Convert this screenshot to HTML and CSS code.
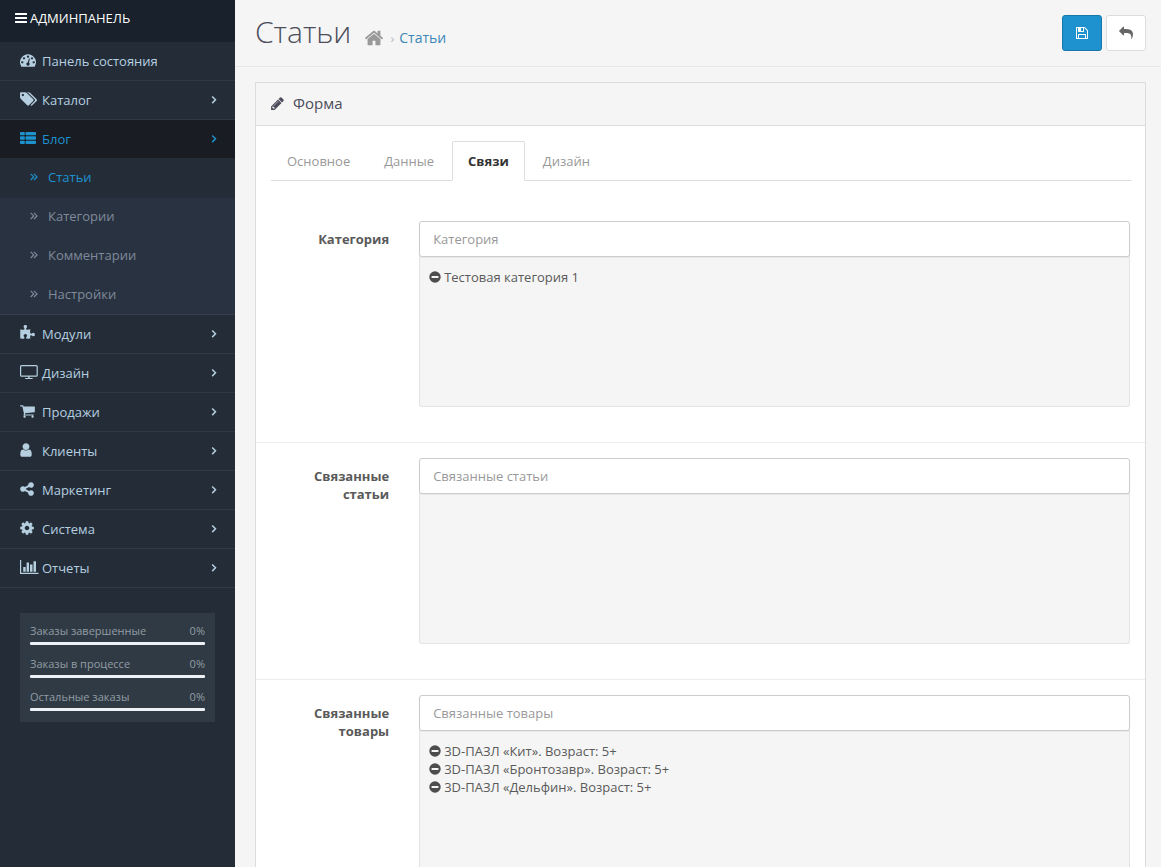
FILE: index.html
```html
<!DOCTYPE html>
<html lang="ru">
<head>
<meta charset="utf-8">
<title>Статьи</title>
<link rel="stylesheet" href="styles.css">
</head>
<body>
<svg class="sprite" aria-hidden="true">
  <symbol id="angle" viewBox="0 0 6 10"><path d="M1.200 1.500l3.300 3.300L1.200 8.100" fill="none" stroke="currentColor" stroke-width="1.500"/></symbol>
  <symbol id="double" viewBox="0 0 8 8"><path d="M.7.8L3.700 3.900.7 7M4 .8l3 3.100L4 7" fill="none" stroke="currentColor" stroke-width="1.200"/></symbol>
  <symbol id="minus" viewBox="0 0 12 12"><path fill-rule="evenodd" d="M6 .3a5.700 5.700 0 1 1 0 11.400A5.700 5.700 0 0 1 6 .3zM2.900 5a.4.4 0 0 0-.4.4v1.200c0 .2.2.4.4.4h6.200c.2 0 .4-.2.4-.4V5.400c0-.2-.2-.4-.4-.4z"/></symbol>
</svg>
<div class="app">
  <aside class="sidebar">
    <div class="brand">
      <svg class="brand-icon" viewBox="0 0 12 10"><path d="M.5 0h11a.5.5 0 0 1 .5.500v1a.5.5 0 0 1-.5.5H.5a.5.5 0 0 1-.5-.5v-1A.5.5 0 0 1 .5 0zM.5 4h11a.5.5 0 0 1 .5.5v1a.5.5 0 0 1-.5.5H.5a.5.5 0 0 1-.5-.5v-1A.5.5 0 0 1 .5 4zM.5 8h11a.5.5 0 0 1 .5.5v1a.5.5 0 0 1-.5.5H.5a.5.5 0 0 1-.5-.5v-1A.5.5 0 0 1 .5 8z"/></svg>
      <span>АДМИНПАНЕЛЬ</span>
    </div>
    <nav>
      <ul class="menu">
        <li><a class="item" href="#"><span class="icon"><svg width="16" height="16" viewBox="0 0 1792 1792"><path d="M384 1152q0-53-37.5-90.5t-90.5-37.5-90.5 37.5-37.5 90.5 37.5 90.5 90.5 37.5 90.5-37.5 37.5-90.5zm192-448q0-53-37.5-90.5t-90.5-37.5-90.5 37.5-37.5 90.5 37.5 90.5 90.5 37.500 90.5-37.5 37.5-90.5zm428 481l101-382q6-26-7.5-48.5t-38.5-29.5-48 6.5-30 39.5l-101 382q-60 5-107 43.5t-63 98.5q-20 77 20 146t117 89 146-20 89-117q16-60-6-117t-72-91zm660-33q0-53-37.5-90.5t-90.5-37.5-90.5 37.5-37.5 90.5 37.5 90.5 90.5 37.5 90.5-37.5 37.5-90.5zm-640-640q0-53-37.5-90.5t-90.5-37.5-90.5 37.5-37.5 90.5 37.5 90.5 90.5 37.5 90.5-37.5 37.5-90.5zm448 192q0-53-37.5-90.5t-90.5-37.5-90.5 37.5-37.5 90.5 37.5 90.5 90.5 37.5 90.5-37.5 37.5-90.5zm320 448q0 261-141 483-19 29-54 29h-1402q-35 0-54-29-141-221-141-483 0-182 71-348t191-286 286-191 348-71 348 71 286 191 191 286 71 348z"/></svg></span>Панель состояния</a></li>
        <li><a class="item" href="#"><span class="icon"><svg width="17" height="16" viewBox="0 0 1899 1792"><path d="M448 448q0-53-37.5-90.5t-90.5-37.5-90.5 37.5-37.5 90.5 37.5 90.5 90.5 37.5 90.5-37.5 37.5-90.5zm1067 576q0 53-37 90l-491 492q-39 37-91 37-53 0-90-37l-715-716q-38-37-64.5-101t-26.5-117v-416q0-52 38-90t90-38h416q53 0 117 26.5t102 64.5l715 714q37 39 37 91zm384 0q0 53-37 90l-491 492q-39 37-91 37-36 0-59-14t-53-45l470-470q37-37 37-90 0-52-37-91l-715-714q-38-38-102-64.5t-117-26.5h224q53 0 117 26.5t102 64.5l715 714q37 39 37 91z"/></svg></span>Каталог<svg class="angle"><use href="#angle"/></svg></a></li>
        <li><a class="item open" href="#"><span class="icon"><svg width="16" height="16" viewBox="0 0 16 16"><path d="M.8 2H4q.8 0 .8.8v1.600q0 .8-.8.8H.8Q0 5.200 0 4.400V2.800Q0 2 .8 2zM6.300 2h8.900q.8 0 .8.8v1.600q0 .8-.8.8H6.300q-.8 0-.8-.8V2.800q0-.8.8-.8zM.8 6.300H4q.8 0 .8.8v1.800q0 .8-.8.8H.8Q0 9.700 0 8.900V7.100q0-.8.8-.8zM6.300 6.300h8.900q.8 0 .8.8v1.800q0 .8-.8.8H6.300q-.8 0-.8-.8V7.100q0-.8.8-.8zM.8 10.800H4q.8 0 .8.8v1.600q0 .8-.8.8H.8q-.8 0-.8-.8v-1.600q0-.8.8-.8zM6.300 10.800h8.900q.8 0 .8.8v1.600q0 .8-.8.8H6.300q-.8 0-.8-.8v-1.600q0-.8.8-.8z"/></svg></span>Блог<svg class="angle"><use href="#angle"/></svg></a>
          <ul class="submenu">
            <li><a class="current" href="#"><svg class="double"><use href="#double"/></svg>Статьи</a></li>
            <li><a href="#"><svg class="double"><use href="#double"/></svg>Категории</a></li>
            <li><a href="#"><svg class="double"><use href="#double"/></svg>Комментарии</a></li>
            <li><a href="#"><svg class="double"><use href="#double"/></svg>Настройки</a></li>
          </ul>
        </li>
        <li><a class="item" href="#"><span class="icon"><svg width="15" height="16" viewBox="64 0 1700 1792"><path d="M1755 1083q0 81-44.5 135t-123.5 54q-41 0-77.5-17.5t-59-38-56.5-38-71-17.5q-110 0-110 124 0 39 16 115t15 115v5q-22 0-33 1-34 3-97.5 11.5t-115.5 13.5-98 5q-61 0-103-26.5t-42-83.5q0-37 17.5-71t38-56.5 38-59 17.5-77.5q0-79-54-123.5t-135-44.5q-84 0-143 45.5t-59 127.5q0 43 15 83t33.5 64.5 33.5 53 15 50.5q0 45-46 89-37 35-117 35-95 0-245-24-9-2-27.5-4t-27.5-4l-13-2q-1 0-3-1-2 0-2-1v-1024q2 1 17.5 3.5t34 5 21.5 3.5q150 24 245 24 80 0 117-35 46-44 46-89 0-22-15-50.5t-33.5-53-33.5-64.5-15-83q0-82 59-127.5t144-45.5q80 0 134 44.5t54 123.5q0 41-17.5 77.5t-38 59-38 56.5-17.5 71q0 57 42 83.5t103 26.5q64 0 180-15t163-17v2q-1 2-3.5 17.5t-5 34-3.5 21.5q-24 150-24 245 0 80 35 117 44 46 89 46 22 0 50.5-15t53-33.5 64.5-33.5 83-15q82 0 127.5 59t45.5 143z"/></svg></span>Модули<svg class="angle"><use href="#angle"/></svg></a></li>
        <li><a class="item" href="#"><span class="icon"><svg width="18" height="16" viewBox="0 0 18 16"><path fill-rule="evenodd" d="M1.500 1h14.800q1.500 0 1.500 1.500v8.800q0 1.500-1.500 1.500H9.600V14h2.600q.6 0 .6.500t-.6.5H5.600Q5 15 5 14.500t.6-.5h2.600v-1.200H1.500Q0 12.800 0 11.300V2.500Q0 1 1.500 1zm0 1.200q-.3 0-.3.300v8.800q0 .3.300.3h14.800q.3 0 .3-.3V2.500q0-.3-.3-.3z"/></svg></span>Дизайн<svg class="angle"><use href="#angle"/></svg></a></li>
        <li><a class="item" href="#"><span class="icon"><svg width="15" height="16" viewBox="64 0 1680 1792"><path d="M704 1536q0 52-38 90t-90 38-90-38-38-90 38-90 90-38 90 38 38 90zm896 0q0 52-38 90t-90 38-90-38-38-90 38-90 90-38 90 38 38 90zm128-1088v512q0 24-16.5 42.5t-40.5 21.5l-1044 122q13 60 13 70 0 16-24 64h920q26 0 45 19t19 45-19 45-45 19h-1024q-26 0-45-19t-19-45q0-11 8-31.5t16-36 21.5-40 15.5-29.5l-177-823h-204q-26 0-45-19t-19-45 19-45 45-19h256q16 0 28.5 6.500t19.5 15.5 13 24.5 8 26 5.5 29.5 4.5 26h1201q26 0 45 19t19 45z"/></svg></span>Продажи<svg class="angle"><use href="#angle"/></svg></a></li>
        <li><a class="item" href="#"><span class="icon"><svg width="12" height="16" viewBox="256 0 1280 1792"><path d="M1536 1399q0 109-62.5 187t-150.5 78h-854q-88 0-150.5-78t-62.5-187q0-85 8.5-160.5t31.5-152 58.5-131 94-89 134.5-34.5q131 128 313 128t313-128q76 0 134.5 34.5t94 89 58.5 131 31.5 152 8.5 160.5zm-256-887q0 159-112.5 271.5t-271.5 112.5-271.5-112.5-112.5-271.5 112.5-271.5 271.5-112.5 271.5 112.5 112.5 271.5z"/></svg></span>Клиенты<svg class="angle"><use href="#angle"/></svg></a></li>
        <li><a class="item" href="#"><span class="icon"><svg width="14" height="16" viewBox="128 0 1536 1792"><path d="M1344 1024q133 0 226.5 93.5t93.5 226.5-93.5 226.5-226.5 93.5-226.5-93.5-93.5-226.5q0-12 2-34l-360-180q-92 86-218 86-133 0-226.5-93.5t-93.5-226.5 93.5-226.5 226.5-93.5q126 0 218 86l360-180q-2-22-2-34 0-133 93.5-226.5t226.5-93.5 226.5 93.5 93.5 226.5-93.5 226.5-226.5 93.5q-126 0-218-86l-360 180q2 22 2 34t-2 34l360 180q92-86 218-86z"/></svg></span>Маркетинг<svg class="angle"><use href="#angle"/></svg></a></li>
        <li><a class="item" href="#"><span class="icon"><svg width="14" height="16" viewBox="128 0 1536 1792"><path d="M1152 896q0-106-75-181t-181-75-181 75-75 181 75 181 181 75 181-75 75-181zm512-109v222q0 12-8 23t-20 13l-185 28q-19 54-39 91 35 50 107 138 10 12 10 25t-9 23q-27 37-99 108t-94 71q-12 0-26-9l-138-108q-44 23-91 38-16 136-29 186-7 28-36 28h-222q-14 0-24.5-8.5t-11.5-21.5l-28-184q-49-16-90-37l-141 107q-10 9-25 9-14 0-25-11-126-114-165-168-7-10-7-23 0-12 8-23 15-21 51-66.5t54-70.5q-27-50-41-99l-183-27q-13-2-21-12.5t-8-23.5v-222q0-12 8-23t19-13l186-28q14-46 39-92-40-57-107-138-10-12-10-24 0-10 9-23 26-36 98.5-107.5t94.500-71.5q13 0 26 10l138 107q44-23 91-38 16-136 29-186 7-28 36-28h222q14 0 24.5 8.5t11.5 21.5l28 184q49 16 90 37l142-107q9-9 24-9 13 0 25 10 129 119 165 170 7 8 7 22 0 12-8 23-15 21-51 66.5t-54 70.5q26 50 41 98l183 28q13 2 21 12.5t8 23.5z"/></svg></span>Система<svg class="angle"><use href="#angle"/></svg></a></li>
        <li><a class="item" href="#"><span class="icon"><svg width="19" height="16" viewBox="0 0 19 16"><path d="M0 1h1.200v12.800H18.500V15H0zM3.200 8h2.500v4.700H3.200zM6.600 3.500H9v9.200H6.600zM10 5.600h2.500v7.100H10zM13.500 2.200H16v10.500h-2.500z"/></svg></span>Отчеты<svg class="angle"><use href="#angle"/></svg></a></li>
      </ul>
    </nav>
    <ul class="stats">
      <li><div class="stat"><span>Заказы завершенные</span><span>0%</span></div><div class="bar"></div></li>
      <li><div class="stat"><span>Заказы в процессе</span><span>0%</span></div><div class="bar"></div></li>
      <li><div class="stat"><span>Остальные заказы</span><span>0%</span></div><div class="bar"></div></li>
    </ul>
  </aside>
  <main class="content">
    <header class="page-header">
      <h1>Статьи</h1>
      <nav class="crumbs">
        <a class="home" href="#" aria-label="Главная"><svg width="20" height="20" viewBox="0 0 1792 1792"><path d="M1472 992v480q0 26-19 45t-45 19h-384v-384h-256v384h-384q-26 0-45-19t-19-45v-480q0-1 .5-3t.5-3l575-474 575 474q1 2 1 6zm223-69l-62 74q-8 9-21 11h-3q-13 0-21-7l-692-577-692 577q-12 8-24 7-13-2-21-11l-62-74q-8-10-7-23.5t11-21.5l719-599q32-26 76-26t76 26l244 204v-195q0-14 9-23t23-9h192q14 0 23 9t9 23v408l219 182q10 8 11 21.5t-7 23.5z"/></svg></a>
        <span class="sep">›</span>
        <a href="#">Статьи</a>
      </nav>
      <div class="actions">
        <button class="btn primary" type="submit" form="form" aria-label="Сохранить"><svg width="14" height="14" viewBox="0 0 1792 1792"><path d="M512 1536h768v-384h-768v384zm896 0h128v-896q0-14-10-38.500t-20-34.500l-281-281q-10-10-34-20t-39-10v416q0 40-28 68t-68 28h-576q-40 0-68-28t-28-68v-416h-128v1280h128v-416q0-40 28-68t68-28h832q40 0 68 28t28 68v416zm-384-928v-320q0-13-9.5-22.5t-22.5-9.5h-192q-13 0-22.5 9.5t-9.5 22.5v320q0 13 9.5 22.5t22.5 9.5h192q13 0 22.5-9.5t9.5-22.5zm640 32v928q0 40-28 68t-68 28h-1344q-40 0-68-28t-28-68v-1344q0-40 28-68t68-28h928q40 0 88 20t76 48l280 280q28 28 48 76t20 88z"/></svg></button>
        <button class="btn" type="button" aria-label="Назад"><svg width="14" height="14" viewBox="0 0 1792 1792"><path d="M1792 1120q0 166-127 451-3 7-10.5 24t-13.5 30-13 22q-12 17-28 17-15 0-23.5-10t-8.5-25q0-9 2.5-26.5t2.5-23.5q5-68 5-123 0-101-17.5-181t-48.5-138.5-80-101-105.5-69.5-133-42.5-154-21.500-175.500-6h-224v256q0 26-19 45t-45 19-45-19l-512-512q-19-19-19-45t19-45l512-512q19-19 45-19t45 19 19 45v256h224q713 0 875 403 53 134 53 333z"/></svg></button>
      </div>
    </header>
    <section class="panel">
      <h2 class="panel-title"><svg width="15" height="15" viewBox="0 0 1792 1792"><path d="M491 1536l91-91-235-235-91 91v107h128v128h107zm523-928q0-22-22-22-10 0-17 7l-542 542q-7 7-7 17 0 22 22 22 10 0 17-7l542-542q7-7 7-17zm-54-192l416 416-832 832h-416v-416zm683 96q0 53-37 90l-166 166-416-416 166-165q36-38 90-38 53 0 91 38l235 234q37 39 37 91z"/></svg>Форма</h2>
      <nav class="tabs">
        <a href="#">Основное</a>
        <a href="#">Данные</a>
        <a class="active" href="#">Связи</a>
        <a href="#">Дизайн</a>
      </nav>
      <form id="form">
        <div class="group">
          <label for="category">Категория</label>
          <div class="field">
            <input id="category" type="text" placeholder="Категория">
            <ul class="well">
              <li><button type="button" class="remove" aria-label="Удалить"><svg><use href="#minus"/></svg></button>Тестовая категория 1</li>
            </ul>
          </div>
        </div>
        <div class="group">
          <label for="articles">Связанные статьи</label>
          <div class="field">
            <input id="articles" type="text" placeholder="Связанные статьи">
            <ul class="well"></ul>
          </div>
        </div>
        <div class="group">
          <label for="products">Связанные товары</label>
          <div class="field">
            <input id="products" type="text" placeholder="Связанные товары">
            <ul class="well">
              <li><button type="button" class="remove" aria-label="Удалить"><svg><use href="#minus"/></svg></button>3D-ПАЗЛ «Кит». Возраст: 5+</li>
              <li><button type="button" class="remove" aria-label="Удалить"><svg><use href="#minus"/></svg></button>3D-ПАЗЛ «Бронтозавр». Возраст: 5+</li>
              <li><button type="button" class="remove" aria-label="Удалить"><svg><use href="#minus"/></svg></button>3D-ПАЗЛ «Дельфин». Возраст: 5+</li>
            </ul>
          </div>
        </div>
      </form>
    </section>
  </main>
</div>
</body>
</html>
```
FILE: styles.css
```css
* { box-sizing: border-box; }
body {
  margin: 0;
  background: #f5f5f5;
  color: #5a5a5a;
  font: 13px/18px "Open Sans", sans-serif;
}
ul { list-style: none; margin: 0; padding: 0; }
a { color: #3d87b8; text-decoration: none; }
svg { fill: currentColor; flex: none; }
.sprite { display: none; }

.app {
  display: grid;
  grid-template-columns: 235px minmax(0, 1fr);
  height: 100vh;
}

/* Sidebar */
.sidebar { background: #242d37; overflow: hidden; }
.brand {
  display: flex;
  align-items: center;
  gap: 3px;
  height: 42px;
  padding: 0 15px 6px;
  background: #19222c;
  color: #fff;
}
.brand-icon { width: 12px; height: 10px; }
.item {
  display: flex;
  align-items: center;
  height: 39px;
  padding: 0 18px 0 20px;
  border-bottom: 1px solid #2e3943;
  color: #b6cfe0;
}
.icon { display: flex; width: 22px; height: 18px; }
.item.open {
  background: #191c22;
  border-bottom-color: #242d37;
  color: #1e91cf;
}
.angle { width: 6px; height: 10px; margin-left: auto; }
.submenu { background: #293240; }
.submenu a {
  display: flex;
  align-items: center;
  gap: 10px;
  height: 39px;
  padding: 0 20px 4px 30px;
  color: #7f8a9b;
}
.submenu li:last-child a { box-shadow: inset 0 -1px #35404c; }
.submenu .current { background: #242d37; color: #1e91cf; }
.double { width: 8px; height: 8px; }
.stats {
  margin: 25px 20px 0;
  padding: 10px 10px 0;
  overflow: hidden;
  background: #2f3a44;
  color: #929da5;
  font-size: 11px;
}
.stats li { margin-bottom: 11px; }
.stat {
  display: flex;
  justify-content: space-between;
  height: 19px;
  line-height: 16px;
}
.bar { height: 3px; background: #edf0f4; border-radius: 1px; }

/* Page header */
.content { overflow-y: auto; scrollbar-width: none; }
.page-header {
  display: flex;
  align-items: flex-start;
  height: 67px;
  padding: 15px 15px 0 20px;
  border-bottom: 1px solid #e7e7e7;
}
h1 {
  margin: 0;
  color: #4c4d5a;
  font-size: 30px;
  line-height: 34px;
  font-weight: 300;
}
.crumbs {
  display: flex;
  align-items: center;
  margin: 13px 0 0 13px;
  font-size: 14px;
  line-height: 20px;
}
.home { display: flex; color: #999; }
.sep { margin: 0 5px 0 6px; color: #bbb; font-size: 13px; }
.actions { display: flex; gap: 4px; margin-left: auto; }
.btn {
  display: grid;
  place-items: center;
  width: 40px;
  height: 36px;
  padding: 0;
  border: 1px solid #ddd;
  border-radius: 3px;
  background: #fff;
  color: #666;
}
.primary { background: #1e91cf; border-color: #1978ab; color: #fff; }

/* Panel */
.panel {
  margin: 15px 15px 20px 20px;
  border: 1px solid #dcdcdc;
  background: #fff;
}
.panel-title {
  display: flex;
  align-items: center;
  gap: 8px;
  height: 43px;
  margin: 0;
  padding: 0 14px 2px;
  border-bottom: 1px solid #dcdcdc;
  background: #f5f5f5;
  color: #4c4d5a;
  font-size: 15px;
  font-weight: 400;
}
.tabs {
  display: flex;
  gap: 2px;
  margin: 15px 14px 25px 15px;
  border-bottom: 1px solid #ddd;
}
.tabs a {
  margin-bottom: -1px;
  padding: 10px 15px;
  border: 1px solid transparent;
  border-radius: 2px 2px 0 0;
  color: #999;
}
.tabs .active {
  border-color: #ddd #ddd #fff;
  background: #fff;
  color: #333;
  font-weight: 700;
}

/* Form */
.group {
  display: grid;
  grid-template-columns: 1fr 5fr;
  padding: 15px 0;
}
.group + .group { border-top: 1px solid #ededed; }
.group label {
  padding: 9px 15px 0;
  text-align: right;
  font-weight: 700;
}
.field { padding: 0 15px; }
.field input {
  display: block;
  width: 100%;
  height: 36px;
  padding: 0 13px;
  border: 1px solid #ccc;
  border-radius: 3px;
  background: #fff;
  box-shadow: 0 1px 1px #ddd;
  color: #555;
  font: inherit;
}
.field input::placeholder { color: #999; opacity: 1; }
.well {
  height: 150px;
  margin-bottom: 20px;
  padding: 10px 9px;
  overflow: auto;
  border: 1px solid #e3e3e3;
  border-top-color: #e8e8e8;
  border-radius: 0 0 3px 3px;
  background: #f5f5f5;
}
.well li { display: flex; align-items: center; gap: 3px; }
.remove {
  display: flex;
  padding: 0;
  border: 0;
  background: none;
  color: #4d4d4d;
}
.remove svg { width: 12px; height: 12px; }
```
